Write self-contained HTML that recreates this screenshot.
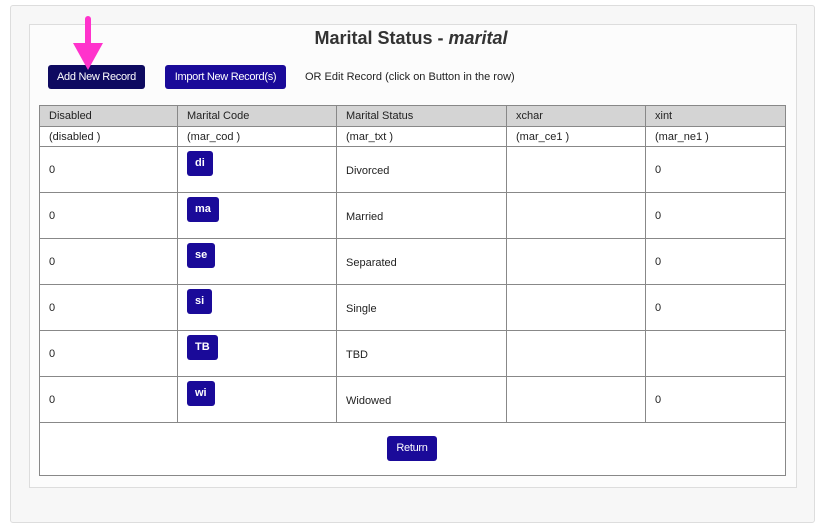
<!DOCTYPE html>
<html><head><style>
body{margin:0;width:822px;height:530px;background:#fff;font-family:"Liberation Sans",Arial,sans-serif;position:relative;overflow:hidden}
.outer{position:absolute;left:10px;top:5px;width:803px;height:516px;background:#f7f7f7;border:1px solid #ddd;border-radius:3px}
.inner{position:absolute;left:29px;top:24px;width:766px;height:462px;background:#fcfcfc;border:1px solid #ddd}
h1{position:absolute;left:0;right:0;top:28px;margin:0;text-align:center;font-size:18px;font-weight:bold;color:#333}
.btn{position:absolute;color:#fff;font-size:11px;text-align:center;border-radius:3px;line-height:24px;letter-spacing:-0.3px}
table{position:absolute;left:39px;top:105px;border-collapse:collapse;font-size:11px;color:#222}
td{border:1px solid #888;padding:0 0 0 9px;vertical-align:middle;box-sizing:border-box}
tr.h td{background:#d4d4d4;height:21px}
tr.s td{height:20px;background:#fff}
tr.d td{height:46px;background:#fff;line-height:14px}
tr.d td.c{vertical-align:top;padding-top:4px}
.cb{display:inline-block;background:#1a0a99;color:#fff;font-weight:bold;border-radius:3px;padding:0 8px;line-height:25px;font-size:11px}
tr.d td.t{padding-top:3px}
</style></head><body>
<div class="outer"></div>
<div class="inner"></div>
<h1>Marital Status - <i>marital</i></h1>
<div class="btn" style="left:48px;top:65px;width:97px;height:24px;background:#0e0a60">Add New Record</div>
<div class="btn" style="left:165px;top:65px;width:121px;height:24px;background:#1a0a99">Import New Record(s)</div>
<div style="position:absolute;left:305px;top:71px;font-size:11px;color:#222">OR Edit Record (click on Button in the row)</div>
<svg style="position:absolute;left:70px;top:14px" width="40" height="58"><rect x="15" y="2" width="6" height="30" rx="3" fill="#ff33cc"/><polygon points="3,29 33,29 18,56" fill="#ff33cc"/></svg>
<table>
<colgroup><col style="width:138px"><col style="width:159px"><col style="width:170px"><col style="width:139px"><col style="width:140px"></colgroup>
<tr class="h"><td>Disabled</td><td>Marital Code</td><td>Marital Status</td><td>xchar</td><td>xint</td></tr>
<tr class="s"><td>(disabled )</td><td>(mar_cod )</td><td>(mar_txt )</td><td>(mar_ce1 )</td><td>(mar_ne1 )</td></tr>
<tr class="d"><td>0</td><td class="c"><span class="cb">di</span></td><td class="t">Divorced</td><td></td><td>0</td></tr>
<tr class="d"><td>0</td><td class="c"><span class="cb">ma</span></td><td class="t">Married</td><td></td><td>0</td></tr>
<tr class="d"><td>0</td><td class="c"><span class="cb">se</span></td><td class="t">Separated</td><td></td><td>0</td></tr>
<tr class="d"><td>0</td><td class="c"><span class="cb">si</span></td><td class="t">Single</td><td></td><td>0</td></tr>
<tr class="d"><td>0</td><td class="c"><span class="cb">TB</span></td><td class="t">TBD</td><td></td><td></td></tr>
<tr class="d"><td>0</td><td class="c"><span class="cb">wi</span></td><td class="t">Widowed</td><td></td><td>0</td></tr>
<tr><td colspan="5" style="height:53px;background:#fff"></td></tr>
</table>
<div class="btn" style="left:387px;top:436px;width:50px;height:25px;line-height:25px;background:#1a0a99">Return</div>
</body></html>
